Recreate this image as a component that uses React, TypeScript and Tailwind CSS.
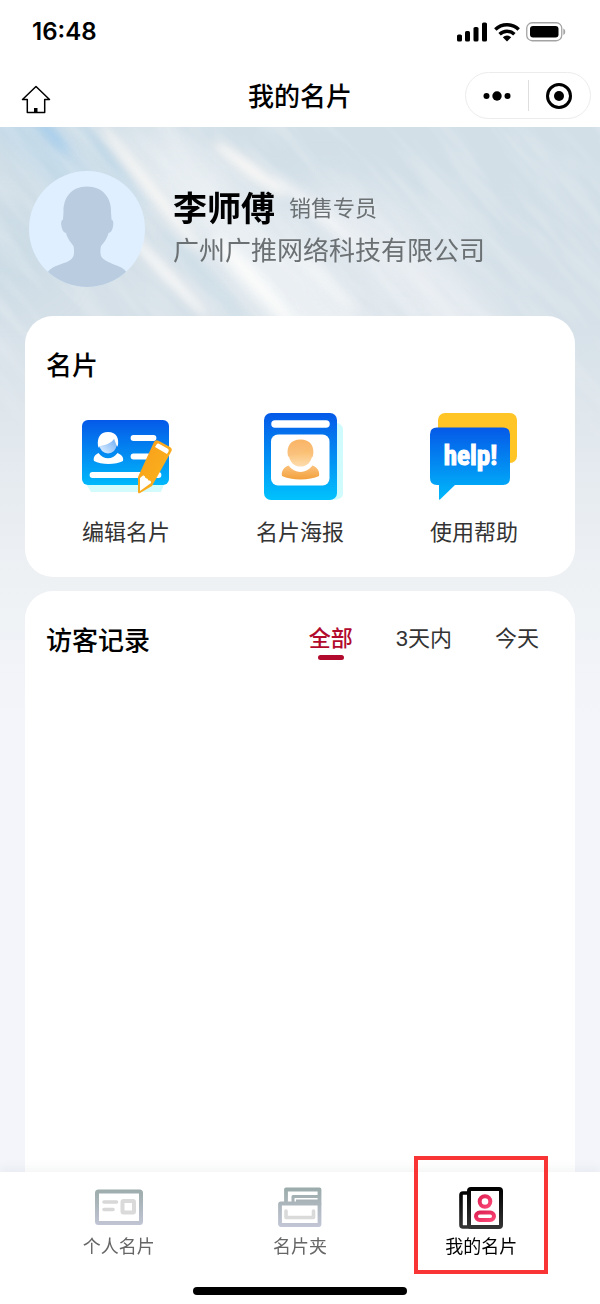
import type { ReactNode } from "react";

const SkyBackground = () => (
  <svg
    className="absolute inset-x-0 top-0 h-[420px] w-full"
    viewBox="0 0 600 420"
    preserveAspectRatio="xMidYMin slice"
    aria-hidden="true"
  >
    <defs>
      <filter id="soft" x="-50%" y="-50%" width="200%" height="200%">
        <feGaussianBlur stdDeviation="5" />
      </filter>
      <filter id="softer" x="-50%" y="-50%" width="200%" height="200%">
        <feGaussianBlur stdDeviation="18" />
      </filter>
      <filter id="wisps" x="0" y="0" width="100%" height="100%">
        <feTurbulence type="fractalNoise" baseFrequency="0.009 0.05" numOctaves="3" seed="8" />
        <feColorMatrix values="0 0 0 0 1  0 0 0 0 1  0 0 0 0 1  2.4 0 0 0 -0.9" />
      </filter>
      <linearGradient id="fade" x1="0" y1="0" x2="0" y2="1">
        <stop offset="0" stopColor="#fff" />
        <stop offset="0.45" stopColor="#fff" />
        <stop offset="0.9" stopColor="#fff" stopOpacity="0" />
      </linearGradient>
      <mask id="skyMask">
        <rect width="600" height="420" fill="url(#fade)" />
      </mask>
    </defs>
    <g mask="url(#skyMask)">
      <g filter="url(#softer)">
        <ellipse cx="40" cy="15" rx="100" ry="22" fill="#b3d3e8" opacity="0.7" transform="rotate(45 40 15)" />
        <ellipse cx="10" cy="120" rx="50" ry="50" fill="#c6d9e4" opacity="0.6" />
        <ellipse cx="270" cy="140" rx="190" ry="34" fill="#f3f6f7" opacity="0.75" transform="rotate(46 270 140)" />
        <ellipse cx="420" cy="160" rx="150" ry="40" fill="#ebeff3" opacity="0.7" transform="rotate(42 420 160)" />
      </g>
      <g filter="url(#soft)">
        <ellipse cx="150" cy="60" rx="80" ry="7" fill="#f8f6f4" opacity="0.8" transform="rotate(52 150 60)" />
        <ellipse cx="250" cy="42" rx="45" ry="7" fill="#faf7f5" opacity="0.9" transform="rotate(36 250 42)" />
        <ellipse cx="320" cy="86" rx="60" ry="5" fill="#f6f7f8" opacity="0.7" transform="rotate(40 320 86)" />
        <ellipse cx="170" cy="150" rx="55" ry="6" fill="#f7f6f5" opacity="0.8" transform="rotate(46 170 150)" />
        <ellipse cx="255" cy="155" rx="60" ry="9" fill="#fdfdfc" opacity="0.85" transform="rotate(48 255 155)" />
        <ellipse cx="320" cy="150" rx="50" ry="5" fill="#f8f9fa" opacity="0.7" transform="rotate(44 320 150)" />
        <ellipse cx="205" cy="150" rx="60" ry="4" fill="#c4dbe7" opacity="0.5" transform="rotate(50 205 150)" />
        <ellipse cx="112" cy="36" rx="60" ry="5" fill="#b0d2e8" opacity="0.55" transform="rotate(52 112 36)" />
        <ellipse cx="52" cy="8" rx="26" ry="5" fill="#9bc9ee" opacity="0.7" transform="rotate(48 52 8)" />
      </g>
      <g transform="rotate(48 300 100)" opacity="0.2">
        <rect x="-200" y="-350" width="1000" height="900" filter="url(#wisps)" />
      </g>
    </g>
  </svg>
);

const StatusBar = () => (
  <div className="flex h-16 items-center justify-between pr-[34px] pl-8">
    <span className="font-['Inter',sans-serif] text-[24px] font-semibold">16:48</span>
    <div className="flex items-center gap-[6px]">
      <svg className="h-5 w-8" viewBox="0 0 32 20" aria-hidden="true">
        <rect x="1" y="12.5" width="5" height="7" rx="1.6" />
        <rect x="9" y="9" width="5" height="10.5" rx="1.6" />
        <rect x="17.500" y="5" width="5" height="14.500" rx="1.6" />
        <rect x="26" y="0.500" width="5" height="19" rx="1.6" />
      </svg>
      <svg className="h-5 w-[26px]" viewBox="0 0 26 20" aria-hidden="true">
        <g fill="none" stroke="#000" strokeWidth="3.4">
          <path d="M1.300 7.500a16.600 16.600 0 0 1 23.400 0" />
          <path d="M5.600 12.300a10.500 10.500 0 0 1 14.800 0" />
        </g>
        <path d="M13 19.500l-4.200-4.200a6 6 0 0 1 8.400 0z" />
      </svg>
      <svg className="h-5 w-10" viewBox="0 0 40 20" aria-hidden="true">
        <rect x="0.750" y="0.750" width="35" height="18" rx="5.500" fill="none" stroke="#a3a3a3" strokeWidth="1.300" />
        <rect x="4" y="4" width="28.500" height="11.500" rx="3" />
        <path d="M37.300 6.500c2.600 1 2.600 5.500 0 6.500z" fill="#a3a3a3" />
      </svg>
    </div>
  </div>
);

const NavBar = () => (
  <div className="grid h-[63px] grid-cols-[1fr_auto_1fr] items-center px-[9px]">
    <a href="#home" aria-label="首页" className="mt-2 ml-3 w-[30px]">
      <svg className="h-[30px] w-[30px]" viewBox="0 0 30 30" fill="none" stroke="#000" strokeWidth="1.500" strokeLinejoin="round">
        <path d="M15 1.500L1.500 14.500H6.300V27.500H23.700V14.500H28.500Z" />
        <path d="M13 23h3.500v4.500H13z" fill="#000" stroke="none" />
      </svg>
    </a>
    <h1 className="pt-[2px] text-[26px] leading-8 font-medium">我的名片</h1>
    <div className="flex h-[47px] w-[126px] items-center justify-self-end rounded-full border border-[#ececec]">
      <button type="button" aria-label="更多" className="flex flex-1 justify-center">
        <svg className="h-6 w-8" viewBox="0 0 32 24">
          <circle cx="5.500" cy="12" r="3" />
          <circle cx="16" cy="12" r="4.700" />
          <circle cx="26.500" cy="12" r="3" />
        </svg>
      </button>
      <span className="h-[31px] w-px bg-[#dedede]" />
      <button type="button" aria-label="关闭" className="flex flex-1 justify-center">
        <svg className="h-7 w-7" viewBox="0 0 28 28">
          <circle cx="14" cy="14" r="11.500" fill="none" stroke="#000" strokeWidth="3" />
          <circle cx="14" cy="14" r="5" />
        </svg>
      </button>
    </div>
  </div>
);

const Avatar = () => (
  <svg className="h-[116px] w-[116px] shrink-0" viewBox="0 0 116 116" aria-hidden="true">
    <defs>
      <clipPath id="avatarClip">
        <circle cx="58" cy="58" r="58" />
      </clipPath>
    </defs>
    <circle cx="58" cy="58" r="58" fill="#dfefff" />
    <path
      clipPath="url(#avatarClip)"
      fill="#bacde0"
      d="M58 15.500C42 15.500 34.500 27 34.500 40c0 3-.5 6-.5 8.500-2.500 1-2 5-1.300 8 .8 3.500 2.500 5 4.300 5.500 1.500 6 5 9.500 7.500 13 .8 4 .7 8 0 10-2.500 6-10.500 7-17.500 10-5 2-8.500 5-9.500 9L30 120h60l9-16c-1.500-4.500-5.500-7-10-9-7-3-14.500-5-17-10-.8-2.500-.7-6.500 0-10 3-3.500 6-7 7.500-13 2-.5 3.500-2 4.300-5.500.7-3 1-7-1.300-8 0-2.500-.5-5.500-.5-8.500 0-13-8-24.500-24-24.500z"
    />
  </svg>
);

const EditCardIcon = () => (
  <svg className="h-[90px] w-[92px]" viewBox="0 0 92 90" aria-hidden="true">
    <defs>
      <linearGradient id="editBlue" x1="0" y1="0" x2="0" y2="1">
        <stop offset="0" stopColor="#0559e8" />
        <stop offset="1" stopColor="#00b8fb" />
      </linearGradient>
      <linearGradient id="editFace" x1="0" y1="1" x2="1" y2="0">
        <stop offset="0" stopColor="#e4f2ff" />
        <stop offset="1" stopColor="#67a9f5" />
      </linearGradient>
      <linearGradient id="pencil" x1="0" y1="0" x2="1" y2="1">
        <stop offset="0" stopColor="#f89c1c" />
        <stop offset="1" stopColor="#fbb81d" />
      </linearGradient>
    </defs>
    <path d="M5 70h80l-4 10H11z" fill="#d3fbfc" />
    <rect x="2" y="8" width="87" height="65" rx="6" fill="url(#editBlue)" />
    <circle cx="28" cy="33" r="8.500" fill="url(#editFace)" />
    <path d="M18 34c-1-8 2-14 10-14 9 0 11 7 10 13l-1 2c-1-3-2-6-3-8-3 4-8 6-14 7l-1 2z" fill="#fff" />
    <path d="M18.500 41c5 7 14 7 19 0 4 1.500 6.500 4.500 5.500 8-7 4-22 4-29 0-1-3.500 1-6.500 4.500-8z" fill="#fff" />
    <path d="M53.500 26h20M53.500 44.500h15M12.500 63h66" stroke="#fff" strokeWidth="5.800" strokeLinecap="round" />
    <path d="M74 30q2-3 5-1l11 6q3 2 1 5L72 74l-12 7q-2 1-2-1V65z" fill="url(#pencil)" />
    <path d="M78.500 31.500l9 5q2 1 1 3l-1.500 2.500-12-7 1.500-2.500q1-1.500 2-1z" fill="#fff" />
    <path d="M60 66l3-2.500q2-.5 2.500 2.500 2.500 0 3 2.500 3-.5 2.500 2.500L60 79z" fill="#fff" />
  </svg>
);

const PosterIcon = () => (
  <svg className="h-[90px] w-[92px]" viewBox="0 0 92 90" aria-hidden="true">
    <defs>
      <linearGradient id="posterBlue" x1="0" y1="0" x2="0" y2="1">
        <stop offset="0" stopColor="#0559e8" />
        <stop offset="1" stopColor="#00c2fd" />
      </linearGradient>
      <linearGradient id="posterHair" x1="0" y1="0" x2="0" y2="1">
        <stop offset="0" stopColor="#f9b465" />
        <stop offset="1" stopColor="#fac583" />
      </linearGradient>
      <linearGradient id="posterFace" x1="0" y1="0" x2="0" y2="1">
        <stop offset="0" stopColor="#f9b050" />
        <stop offset="1" stopColor="#fddcaf" />
      </linearGradient>
      <linearGradient id="posterBody" x1="0" y1="0" x2="0" y2="1">
        <stop offset="0" stopColor="#fbc27c" />
        <stop offset="1" stopColor="#f3a03c" />
      </linearGradient>
    </defs>
    <path d="M80 10q9 2 9 7v65q0 5-9 6z" fill="#cffbfc" />
    <rect x="10" y="1" width="73" height="87" rx="7" fill="url(#posterBlue)" />
    <path d="M21 12h51" stroke="#fff" strokeWidth="7.500" strokeLinecap="round" />
    <rect x="17" y="22.500" width="58.500" height="51" rx="7" fill="#fff" />
    <circle cx="46.500" cy="43" r="11.500" fill="url(#posterFace)" />
    <path d="M34 44c-2-10 3-16.500 12.500-16.500S61 34 59 44l-1.500 2c-.5-5-2-8-4.500-9.500C48 41.500 42 43 36 43.500l-.5 2z" fill="url(#posterHair)" />
    <path d="M34.500 53.500c6 8.500 18 8.500 24 0 5 2 7.500 6 6.500 10.500-9 4.500-28 4.500-37 0-1-4.500 1.500-8.500 6.500-10.500z" fill="url(#posterBody)" />
  </svg>
);

const HelpIcon = () => (
  <svg className="h-[90px] w-[92px]" viewBox="0 0 92 90" aria-hidden="true">
    <defs>
      <linearGradient id="helpBlue" x1="0" y1="0" x2="0" y2="1">
        <stop offset="0" stopColor="#0559e8" />
        <stop offset="1" stopColor="#00b9fb" />
      </linearGradient>
    </defs>
    <rect x="10" y="1" width="79" height="50" rx="7" fill="#ffc425" />
    <path d="M9 15.500h66q7 0 7 7V66q0 7-7 7H27L12 87.500q-1 1-1-1V73H9q-7 0-7-7V22.500q0-7 7-7z" fill="url(#helpBlue)" />
    <text
      x="42.500"
      y="53"
      textAnchor="middle"
      fill="#fff"
      stroke="#fff"
      strokeWidth="1"
      className="font-['Liberation_Sans_Narrow','Roboto_Condensed','Liberation_Sans',sans-serif] text-[27px] font-bold"
    >
      help!
    </text>
  </svg>
);

const PersonalCardIcon = () => (
  <svg className="h-10 w-12" viewBox="0 0 48 40" fill="none" aria-hidden="true">
    <defs>
      <linearGradient id="grayLine" x1="0" y1="0" x2="0" y2="40" gradientUnits="userSpaceOnUse">
        <stop offset="0" stopColor="#9aaaa9" />
        <stop offset="1" stopColor="#c3c6d6" />
      </linearGradient>
    </defs>
    <rect x="2" y="4.500" width="44" height="31.500" rx="1.500" stroke="url(#grayLine)" strokeWidth="4" />
    <path d="M9 15h12.500M9 22.500h9" stroke="#d8d8d8" strokeWidth="3.600" strokeLinecap="round" />
    <rect x="27.500" y="14" width="11.500" height="11.500" rx="1" stroke="#dadada" strokeWidth="4" />
  </svg>
);

const CardHolderIcon = () => (
  <svg className="h-10 w-12" viewBox="0 0 48 40" fill="none" aria-hidden="true">
    <g stroke="url(#grayLine)" strokeWidth="3.800" strokeLinejoin="round">
      <path d="M10 16V2.500h33.500v15" />
      <path d="M17 16V9.500h26M20 14h23" strokeWidth="3" />
      <rect x="4" y="16.500" width="39.500" height="21.500" rx="1" fill="#fff" />
    </g>
    <path d="M10 24v6.500h27.500V24" stroke="#dadada" strokeWidth="3.600" strokeLinecap="round" strokeLinejoin="round" />
  </svg>
);

const MyCardIcon = () => (
  <svg className="h-[42px] w-12" viewBox="0 0 48 42" fill="none" aria-hidden="true">
    <defs>
      <linearGradient id="darkLine" x1="0" y1="0" x2="0" y2="1">
        <stop offset="0" stopColor="#000" />
        <stop offset="1" stopColor="#333" />
      </linearGradient>
      <linearGradient id="pinkLine" x1="0" y1="0" x2="1" y2="1">
        <stop offset="0" stopColor="#df2455" />
        <stop offset="1" stopColor="#fb4676" />
      </linearGradient>
    </defs>
    <rect x="4" y="6" width="10" height="34" rx="2" stroke="url(#darkLine)" strokeWidth="3.600" />
    <rect x="12" y="2" width="32" height="38" rx="2" fill="#fff" stroke="url(#darkLine)" strokeWidth="4" />
    <circle cx="28" cy="14.500" r="5.300" stroke="url(#pinkLine)" strokeWidth="4" />
    <rect x="19" y="25.500" width="18" height="7.500" rx="3.700" stroke="url(#pinkLine)" strokeWidth="4" />
  </svg>
);

type Entry = { label: string; href: string; icon: ReactNode };

const actions: Entry[] = [
  { label: "编辑名片", href: "#edit", icon: <EditCardIcon /> },
  { label: "名片海报", href: "#poster", icon: <PosterIcon /> },
  { label: "使用帮助", href: "#help", icon: <HelpIcon /> },
];

const tabs: Entry[] = [
  { label: "个人名片", href: "#personal", icon: <PersonalCardIcon /> },
  { label: "名片夹", href: "#holder", icon: <CardHolderIcon /> },
  { label: "我的名片", href: "#mine", icon: <MyCardIcon /> },
];

const filters = ["全部", "3天内", "今天"];

const App = () => {
  return (
    <div className="flex min-h-screen flex-col bg-[#f3f5fa] font-['Liberation_Sans','Noto_Sans_CJK_SC',sans-serif] text-black">
      <header className="bg-white">
        <StatusBar />
        <NavBar />
      </header>

      <main className="relative flex flex-1 flex-col bg-[linear-gradient(to_bottom,#d2dfe7_0,#d5e0e8_189px,#e4eaef_340px,#eef1f4_450px,#f3f5fa_600px)] px-[25px]">
        <SkyBackground />

        <section className="relative flex h-[189px] items-center gap-7 px-1 pt-[14px]">
          <Avatar />
          <div>
            <div className="flex items-center gap-[14px]">
              <h2 className="text-[34px] leading-11 font-bold">李师傅</h2>
              <span className="text-[22px] leading-8 text-[#6b7073]">销售专员</span>
            </div>
            <p className="text-[26px] leading-10 text-[#6b7073]">广州广推网络科技有限公司</p>
          </div>
        </section>

        <section className="relative rounded-[28px] bg-white px-[14px] pt-[34px] pb-7">
          <h2 className="px-[7px] text-[26px] leading-8 font-medium">名片</h2>
          <div className="mt-[30px] grid grid-cols-3">
            {actions.map((item) => (
              <a key={item.label} href={item.href} className="flex flex-col items-center gap-[15px]">
                {item.icon}
                <span className="text-[22px] leading-8 text-[#333]">{item.label}</span>
              </a>
            ))}
          </div>
        </section>

        <section className="relative mt-[14px] flex-1 rounded-t-[28px] bg-white px-[21px] pt-[34px]">
          <div className="flex items-start justify-between pr-[15px]">
            <h2 className="text-[26px] leading-8 font-medium">访客记录</h2>
            <div className="flex gap-[43px]">
              {filters.map((label, i) => (
                <button
                  key={label}
                  type="button"
                  className={
                    i === 0
                      ? "flex flex-col items-center text-[22px] leading-7 font-medium text-[#b20a2c]"
                      : "flex flex-col items-center text-[22px] leading-7 text-[#333]"
                  }
                >
                  {label}
                  {i === 0 && <span className="mt-[2px] h-[5px] w-[26px] rounded-full bg-[#b20a2c]" />}
                </button>
              ))}
            </div>
          </div>
        </section>
      </main>

      <footer className="relative bg-white pb-[9px] shadow-[0_-4px_10px_rgba(70,80,110,0.06)]">
        <nav className="grid grid-cols-3 px-7 pt-[15px]">
          {tabs.map((tab, i) => (
            <a key={tab.label} href={tab.href} className="relative flex flex-col items-center">
              <span className="flex h-[46px] items-start">{tab.icon}</span>
              <span
                className={
                  i === 2
                    ? "text-[18px] leading-7 text-black"
                    : "text-[18px] leading-7 text-[#666]"
                }
              >
                {tab.label}
              </span>
              {i === 2 && (
                <span className="absolute -top-[31px] left-1/2 h-[118px] w-[134px] -translate-x-1/2 border-4 border-[#f93434]" />
              )}
            </a>
          ))}
        </nav>
        <div className="mx-auto mt-[26px] h-2 w-[214px] rounded-full bg-black" />
      </footer>
    </div>
  );
};

export default App;
